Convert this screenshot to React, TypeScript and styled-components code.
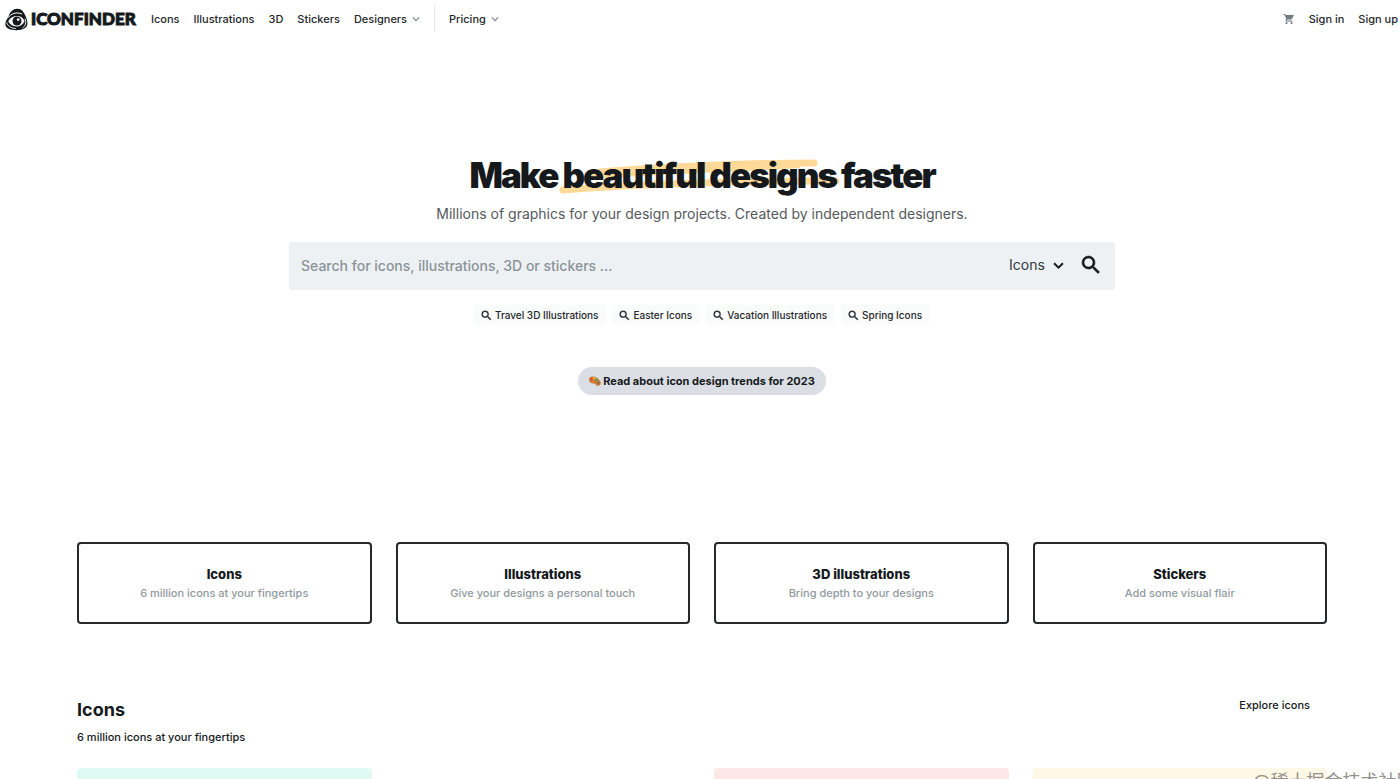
import React from "react";
import styled, { createGlobalStyle } from "styled-components";

const Global = createGlobalStyle`
  *, *::before, *::after { box-sizing: border-box; }
  body { margin: 0; background: #fff; color: #15191c; font-family: Inter, "Noto Sans CJK SC", sans-serif; }
  h1, h2, h3, p, ul { margin: 0; padding: 0; }
  a { color: inherit; text-decoration: none; }
  button, input, select { font: inherit; color: inherit; border: 0; padding: 0; background: none; outline: none; }
  button { cursor: pointer; }
`;

const Page = styled.div`
  position: relative;
  height: 100vh;
  overflow: hidden;
`;

const Header = styled.header`
  display: flex;
  align-items: center;
  height: 38px;
  padding: 0 2px 0 5px;
  font-size: 11px;
  line-height: 16px;
  font-weight: 500;
  color: #24282b;
`;

const Brand = styled.a`
  display: flex;
  align-items: center;
  gap: 3px;
  width: 146px;
  color: #15191c;
`;

const BrandName = styled.span`
  font-family: Lato, sans-serif;
  font-weight: 900;
  font-size: 17px;
  line-height: 24px;
  -webkit-text-stroke: 1px currentColor;
`;

const Nav = styled.nav`
  display: flex;
  align-items: center;
  gap: 14px;
`;

const NavButton = styled.button`
  display: flex;
  align-items: center;
  gap: 5px;
`;

const Divider = styled.span`
  width: 1px;
  height: 26px;
  background: #e3e7ea;
`;

const Account = styled(Nav)`
  margin-left: auto;
`;

const Hero = styled.section`
  display: flex;
  flex-direction: column;
  align-items: center;
  padding: 114px 20px 147px 24px;
`;

const Title = styled.h1`
  font-size: 35px;
  line-height: 46px;
  font-weight: 900;
  letter-spacing: -2px;
`;

const Marked = styled.span`
  position: relative;
  z-index: 0;
`;

const Brush = styled.svg`
  position: absolute;
  z-index: -1;
  left: -4px;
  top: 4px;
  width: 284px;
  height: 36px;
`;

const Lead = styled.p`
  margin-top: 4px;
  font-size: 14px;
  line-height: 24px;
  color: #55595c;
`;

const SearchForm = styled.form`
  display: flex;
  align-items: center;
  width: 100%;
  max-width: 826px;
  height: 48px;
  margin-top: 16px;
  padding: 0 12px 2px;
  border-radius: 3px;
  background: #edf1f4;
`;

const SearchInput = styled.input`
  flex: 1;
  min-width: 0;
  height: 100%;
  font-size: 14px;
  font-weight: 500;
  &::placeholder { color: #8b9398; opacity: 1; }
`;

const Picker = styled.label`
  display: flex;
  align-items: center;
  gap: 8px;
  margin-right: 15px;
`;

const PickerSelect = styled.select`
  appearance: none;
  font-size: 14px;
  line-height: 20px;
  color: #33383b;
`;

const IconButton = styled.button`
  display: flex;
`;

const Suggestions = styled.ul`
  display: flex;
  gap: 6px;
  margin-top: 15px;
  list-style: none;
`;

const Suggestion = styled.a`
  display: flex;
  align-items: center;
  gap: 2px;
  height: 20px;
  padding: 0 8px 0 6px;
  border-radius: 3px;
  background: #fafbfb;
  font-size: 10px;
  line-height: 16px;
  font-weight: 500;
  color: #24282b;
`;

const Trend = styled.a`
  display: flex;
  align-items: center;
  gap: 2px;
  height: 28px;
  margin-top: 42px;
  padding: 0 11px;
  border-radius: 14px;
  background: #dbdfe5;
  font-size: 11px;
  line-height: 16px;
  font-weight: 700;
`;

const Grid = styled.div`
  display: grid;
  grid-template-columns: repeat(4, 1fr);
  gap: 24px;
`;

const Content = styled.main`
  padding: 0 73px 0 77px;
`;

const Category = styled.a`
  display: flex;
  flex-direction: column;
  align-items: center;
  justify-content: center;
  height: 82px;
  border: 2px solid #26282a;
  border-radius: 4px;
  text-align: center;
`;

const CategoryName = styled.h3`
  font-size: 13px;
  line-height: 19px;
  font-weight: 800;
`;

const CategoryNote = styled.p`
  font-size: 11px;
  line-height: 18px;
  font-weight: 500;
  color: #909a9e;
`;

const SectionHead = styled.div`
  display: flex;
  justify-content: space-between;
  align-items: flex-start;
  margin: 72px 0 22px;
  padding-right: 17px;
  font-size: 11px;
  line-height: 18px;
  font-weight: 500;
`;

const SectionTitle = styled.h2`
  margin-bottom: 4px;
  font-size: 18px;
  line-height: 28px;
  font-weight: 700;
`;

const Tile = styled.a<{ $tone: string }>`
  height: 180px;
  border-radius: 4px;
  background: ${(p) => p.$tone};
`;

const Watermark = styled.span`
  position: absolute;
  left: calc(100% - 147px);
  top: calc(100% - 9px);
  font-size: 18px;
  line-height: 24px;
  white-space: nowrap;
  color: #96928a;
`;

const Chevron = ({ size = 8, color = "#7f868a", width = 1.5 }) => (
  <svg width={size} height={size} viewBox="0 0 10 10" fill="none" stroke={color} strokeWidth={width} aria-hidden="true">
    <path d="M1 3l4 4 4-4" />
  </svg>
);

const Magnifier = ({ size = 12 }) => (
  <svg width={size} height={size} viewBox="0 0 24 24" fill="currentColor" stroke="currentColor" strokeWidth="0.6" aria-hidden="true">
    <path d="M15.5 14h-.79l-.28-.27A6.47 6.47 0 0 0 16 9.5 6.5 6.5 0 1 0 9.5 16c1.61 0 3.09-.59 4.23-1.57l.27.28v.79l5 4.99L20.49 19l-4.99-5zm-6 0C7.01 14 5 11.99 5 9.5S7.01 5 9.5 5 14 7.01 14 9.5 11.99 14 9.5 14z" />
  </svg>
);

const EyeLogo = () => (
  <svg width="23" height="23" viewBox="0 0 23 23" fill="none" aria-hidden="true">
    <path d="M3.500 8.500C5 4 8 .8 12 .8c3.300 0 5.600 1.500 7 4.200 2 3.500 3.800 7.500 3.400 11-.4 4-4.400 6.200-10.900 6.200C5 22.200.6 20.500.4 16.500.3 13.500 2 11 3.500 8.500z" fill="#15191c" />
    <path d="M3 9.800C6 5.500 11.500 3.600 17 6" stroke="#fff" strokeWidth="1" />
    <path d="M20 10.500c1.500 4 .5 7.500-2.500 9.700" stroke="#fff" strokeWidth=".9" />
    <path d="M1.800 14.500c.8 3.500 4 5.800 9 6" stroke="#fff" strokeWidth=".9" />
    <path d="M3.200 13.300C5.500 9.500 8.500 8 12 8c3.600 0 6.300 1.900 7.600 5.300-1.800 3.600-4.500 5.200-8 5.200-3.600 0-6.600-1.800-8.400-5.200z" fill="#fff" />
    <circle cx="12" cy="13" r="4.500" fill="#15191c" />
    <circle cx="13.200" cy="11.600" r="1.400" fill="#fff" />
  </svg>
);

const Cart = () => (
  <svg width="12" height="12" viewBox="0 0 24 24" fill="#6f7b82" aria-hidden="true">
    <path d="M7 18c-1.100 0-2 .9-2 2s.9 2 2 2 2-.9 2-2-.9-2-2-2zM1 2v2h2l3.600 7.600-1.350 2.450C4.520 15.370 5.480 17 7 17h12v-2H7.400l1.100-2h7.450c.75 0 1.410-.41 1.750-1.030L22 4H5.200l-.94-2H1zm16 16c-1.100 0-2 .9-2 2s.9 2 2 2 2-.9 2-2-.9-2-2-2z" />
  </svg>
);

const Palette = () => (
  <svg width="12" height="10" viewBox="0 0 12 10" aria-hidden="true">
    <path d="M0 3C1 0 5 0 8 2s5 5 3 7-4 0-5-1-2 0-4-1-2-3-2-4z" fill="#c77b3c" />
    <circle cx="2.500" cy="3" r="1.200" fill="#e6452f" />
    <circle cx="5" cy="2.300" r="1.200" fill="#f3ae31" />
    <circle cx="8" cy="4" r="1.400" fill="#5b9e48" />
    <circle cx="9.500" cy="7" r="1.100" fill="#8a6a3a" />
    <circle cx="4" cy="5.800" r="1.100" fill="#f07a24" />
  </svg>
);

const suggestions = ["Travel 3D Illustrations", "Easter Icons", "Vacation Illustrations", "Spring Icons"];

const categories = [
  { name: "Icons", note: "6 million icons at your fingertips" },
  { name: "Illustrations", note: "Give your designs a personal touch" },
  { name: "3D illustrations", note: "Bring depth to your designs" },
  { name: "Stickers", note: "Add some visual flair" },
];

const tones = ["#dff9f3", "#ffffff", "#fde7e7", "#fff8e6"];

export default function App() {
  return (
    <Page>
      <Global />
      <Header>
        <Brand href="#">
          <EyeLogo />
          <BrandName>ICONFINDER</BrandName>
        </Brand>
        <Nav>
          <a href="#icons">Icons</a>
          <a href="#illustrations">Illustrations</a>
          <a href="#3d">3D</a>
          <a href="#stickers">Stickers</a>
          <NavButton type="button">Designers <Chevron /></NavButton>
          <Divider />
          <NavButton type="button">Pricing <Chevron /></NavButton>
        </Nav>
        <Account>
          <IconButton type="button" aria-label="Cart"><Cart /></IconButton>
          <a href="#signin">Sign in</a>
          <a href="#signup">Sign up</a>
        </Account>
      </Header>
      <Hero>
        <Title>
          Make{" "}
          <Marked>
            <Brush viewBox="0 0 284 36" fill="none" stroke="#fed998" strokeLinecap="round" strokeLinejoin="round" aria-hidden="true">
              <path d="M42 14C110 9 190 5 256 5" strokeWidth="7" />
              <path d="M30 18C110 13 180 11 240 7" strokeWidth="6" />
              <path d="M5 32C80 26 180 23 278 23" strokeWidth="7" />
            </Brush>
            beautiful designs
          </Marked>{" "}
          faster
        </Title>
        <Lead>Millions of graphics for your design projects. Created by independent designers.</Lead>
        <SearchForm onSubmit={(e) => e.preventDefault()}>
          <SearchInput type="text" aria-label="Search" placeholder="Search for icons, illustrations, 3D or stickers ..." />
          <Picker>
            <PickerSelect aria-label="Asset type">
              <option>Icons</option>
            </PickerSelect>
            <Chevron size={11} color="#15191c" width={1.8} />
          </Picker>
          <IconButton type="submit" aria-label="Search"><Magnifier size={24} /></IconButton>
        </SearchForm>
        <Suggestions>
          {suggestions.map((text) => (
            <li key={text}>
              <Suggestion href="#search"><Magnifier size={13} />{text}</Suggestion>
            </li>
          ))}
        </Suggestions>
        <Trend href="#trends"><Palette />Read about icon design trends for 2023</Trend>
      </Hero>
      <Content>
        <Grid>
          {categories.map((c) => (
            <Category href="#category" key={c.name}>
              <CategoryName>{c.name}</CategoryName>
              <CategoryNote>{c.note}</CategoryNote>
            </Category>
          ))}
        </Grid>
        <SectionHead>
          <div>
            <SectionTitle>Icons</SectionTitle>
            <p>6 million icons at your fingertips</p>
          </div>
          <a href="#explore">Explore icons</a>
        </SectionHead>
        <Grid>
          {tones.map((tone) => <Tile href="#set" key={tone} $tone={tone} />)}
        </Grid>
      </Content>
      <Watermark>@稀土掘金技术社区</Watermark>
    </Page>
  );
}
